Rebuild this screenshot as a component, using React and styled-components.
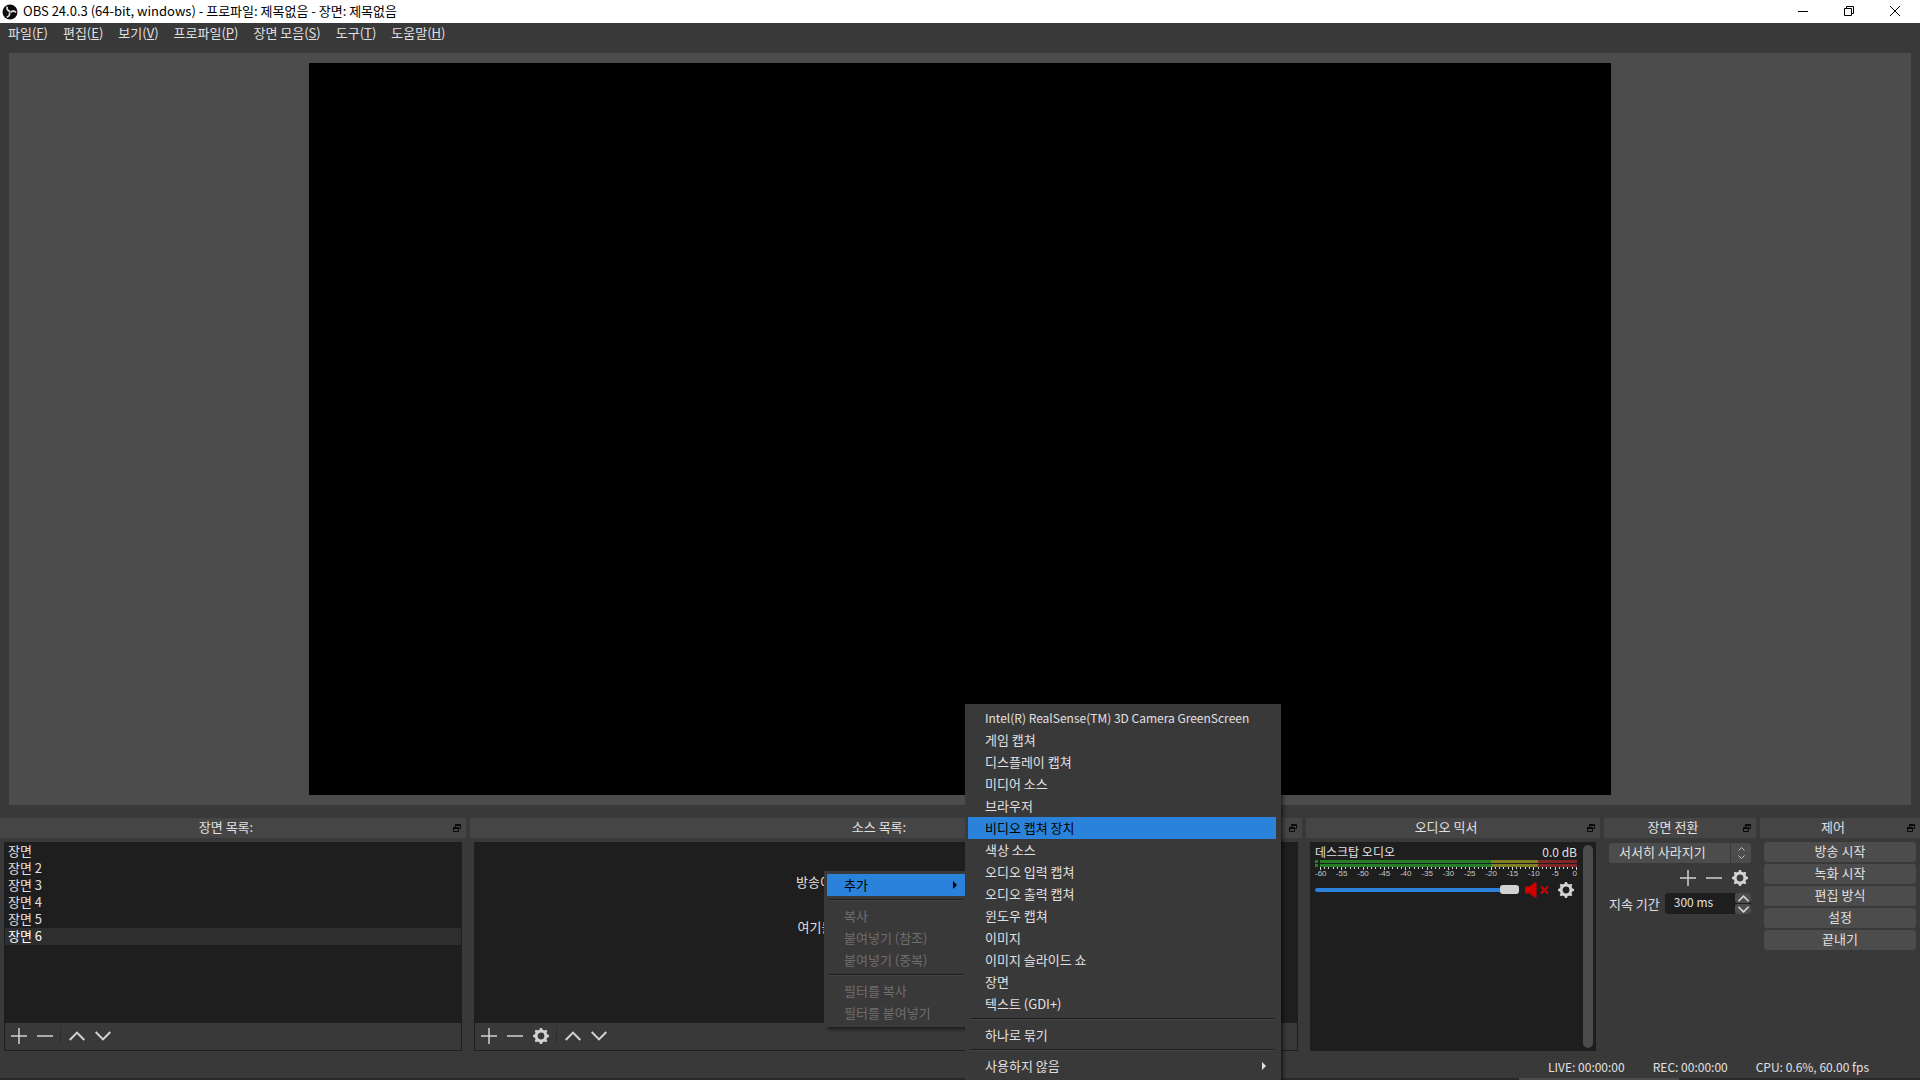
import React, { useState } from "react";
import styled, { createGlobalStyle } from "styled-components";

const ui = '"Noto Sans CJK KR", sans-serif';

const Global = createGlobalStyle`
  *, *::before, *::after { box-sizing: border-box; }
  body { margin: 0; background: #3a393a; color: #e1e0e1; font: 13px/16px ${ui}; overflow: hidden; }
  button, input, select { font: inherit; color: inherit; margin: 0; padding: 0; border: 0; background: none; }
  ul { list-style: none; margin: 0; padding: 0; }
`;

const Window = styled.div`
  display: flex;
  flex-direction: column;
  height: 100vh;
`;

const TitleBar = styled.header`
  display: flex;
  align-items: center;
  gap: 5px;
  height: 23px;
  padding-left: 2px;
  background: #fff;
  color: #000;
  flex: none;
`;

const WindowTitle = styled.h1`
  margin: 0;
  padding-bottom: 2px;
  flex: 1;
  font-size: 13px;
  font-weight: 400;
`;

const Caption = styled.div`
  display: flex;
  gap: 7px;
  padding-right: 6px;
`;

const CaptionButton = styled.button`
  display: grid;
  place-items: center;
  width: 39px;
  height: 22px;
  padding-bottom: 2px;
`;

const MenuBar = styled.nav`
  display: flex;
  align-items: center;
  gap: 15px;
  height: 22px;
  padding: 0 0 2px 8px;
  flex: none;
`;

const MenuButton = styled.button`
  white-space: nowrap;
`;

const PreviewArea = styled.main`
  display: grid;
  place-items: center;
  flex: 1;
  min-height: 0;
  margin: 8px 9px 13px;
  padding: 10px;
  background: #4c4c4c;
`;

const Preview = styled.div`
  height: 100%;
  aspect-ratio: 16 / 9;
  background: #000;
`;

const Docks = styled.div`
  display: grid;
  grid-template-columns: 466fr 832fr 294fr 152fr 160fr;
  gap: 4px;
  height: 233px;
  flex: none;
`;

const DockPanel = styled.section`
  display: flex;
  flex-direction: column;
  min-width: 0;
`;

const DockHeader = styled.div`
  display: flex;
  align-items: center;
  height: 20px;
  padding-right: 5px;
  background: #464546;
  flex: none;
`;

const DockTitle = styled.h2`
  flex: 1;
  margin: 0;
  padding-bottom: 2px;
  font-size: 13px;
  line-height: 16px;
  font-weight: 400;
  text-align: center;
`;

const FloatButton = styled.button`
  display: grid;
  place-items: center;
  width: 9px;
  height: 12px;
`;

const ListFrame = styled.div`
  display: flex;
  flex-direction: column;
  flex: 1;
  margin: 4px 4px 0;
  border: 1px solid #1f1e1f;
  background: #1f1e1f;
`;

const SceneList = styled.ul`
  flex: 1;
`;

const SceneRow = styled.li`
  height: 17px;
  background: ${(p) => (p.$selected ? "#2f2e2f" : "transparent")};
  color: ${(p) => (p.$selected ? "#fff" : "#e1e0e1")};
`;

const SceneButton = styled.button`
  display: block;
  width: 100%;
  padding-left: 3px;
  text-align: left;
  line-height: 15px;
`;

const Toolbar = styled.div`
  display: flex;
  align-items: center;
  height: 27px;
  padding: 0 0 2px 1px;
  background: #3a393a;
`;

const IconButton = styled.button`
  display: grid;
  place-items: center;
  width: 26px;
  height: 24px;
`;

const Divider = styled.span`
  width: 1px;
  height: 19px;
  margin: 0 3px 0 2px;
  background: #2f2e2f;
`;

const EmptyHint = styled.div`
  flex: 1;
  padding-top: 31px;
  text-align: center;

  p { margin: 0 0 29px; }
`;

const MixerFrame = styled.div`
  display: flex;
  flex: 1;
  gap: 6px;
  margin: 4px 4px 0;
  padding: 3px 3px 3px 5px;
  background: #1f1e1f;
`;

const Channel = styled.div`
  flex: 1;
  min-width: 0;
`;

const ChannelHead = styled.div`
  display: flex;
  justify-content: space-between;
  height: 15px;
  font-size: 12px;
  line-height: 14px;
`;

const Meter = styled.svg`
  display: block;
  width: 100%;
  height: 18px;

  text { font: 8px "Liberation Sans", sans-serif; fill: #c8c8c8; }
`;

const ChannelControls = styled.div`
  display: grid;
  grid-template-columns: 1fr 24px 22px;
  align-items: center;
  gap: 6px;
  height: 24px;

  button { width: 100%; }
`;

const Volume = styled.input.attrs({ type: "range" })`
  width: 100%;
  min-width: 0;
  height: 20px;
  appearance: none;

  &::-webkit-slider-runnable-track {
    height: 4px;
    border-radius: 2px;
    background: #2a82da;
  }
  &::-webkit-slider-thumb {
    appearance: none;
    width: 19px;
    height: 9px;
    margin-top: -3px;
    border-radius: 3px;
    background: #d2d2d2;
  }
`;

const ScrollBar = styled.div`
  width: 10px;
  border-radius: 5px;
  background: #4c4c4c;
`;

const TransitionBody = styled.div`
  display: flex;
  flex-direction: column;
  padding: 5px;
`;

const SelectBox = styled.div`
  display: grid;
  grid-template-columns: 1fr 20px;
  height: 20px;
`;

const TransitionSelect = styled.select`
  appearance: none;
  grid-area: 1 / 1 / 2 / 3;
  width: 100%;
  padding: 0 24px 2px 10px;
  border-radius: 3px;
  background: linear-gradient(#3a393a, #3a393a) right 20px top / 1px 100% no-repeat #4c4c4c;
`;

const SelectArrow = styled.span`
  display: grid;
  place-items: center;
  grid-area: 1 / 2;
  pointer-events: none;
`;

const TransitionTools = styled.div`
  display: flex;
  justify-content: flex-end;
  margin: 3px -2px 3px 0;
`;

const DurationRow = styled.div`
  display: flex;
  align-items: center;
  gap: 5px;
  height: 21px;
`;

const SpinBox = styled.div`
  display: flex;
  flex: 1;
  min-width: 0;
  height: 21px;
  border-radius: 3px;
  overflow: hidden;
  background: #1f1e1f;
`;

const SpinInput = styled.input`
  flex: 1;
  width: 0;
  padding: 0 0 3px 9px;
  font-size: 12px;
`;

const SpinButtons = styled.div`
  display: grid;
  grid-template-rows: 1fr 1fr;
  gap: 1px;
  width: 16px;
`;

const SpinButton = styled.button`
  display: grid;
  place-items: center;
  border-radius: 2px;
  background: #4c4c4c;
`;

const ControlList = styled.div`
  display: grid;
  gap: 2px;
  padding: 4px;
`;

const ControlButton = styled.button`
  height: 20px;
  padding-bottom: 2px;
  border-radius: 3px;
  background: #4c4c4c;
`;

const StatusBar = styled.footer`
  display: flex;
  align-items: center;
  justify-content: flex-end;
  gap: 28px;
  height: 27px;
  padding: 5px 51px 0 0;
  flex: none;
  font-size: 12px;
`;

const Edge = styled.div`
  height: 2px;
  flex: none;
  background: linear-gradient(#4c4c4c, #4c4c4c) right 241px top / 160px 100% no-repeat #282828;
`;

const Popup = styled.div`
  position: absolute;
  left: ${(p) => p.$x}px;
  top: ${(p) => p.$y}px;
  width: ${(p) => p.$w}px;
  padding: 3px;
  background: #3a393a;
  box-shadow: 3px 3px 4px -1px rgba(0, 0, 0, 0.6);
`;

const PopupItem = styled.button`
  display: flex;
  align-items: center;
  justify-content: space-between;
  width: ${(p) => (p.$inset ? "308px" : "100%")};
  height: 22px;
  padding: 0 10px 0 17px;
  background: ${(p) => (p.$active ? "#2a82da" : "transparent")};
  color: ${(p) => (p.$active ? "#000" : "#e1e0e1")};
  font-size: ${(p) => (p.$latin ? "12px" : "13px")};
  text-align: left;
  white-space: nowrap;

  &:disabled { color: #6f6e6f; }
`;

const PopupRule = styled.hr`
  height: 2px;
  margin: 3px 4px 4px 2px;
  border: 0;
  border-top: 1px solid #1f1e1f;
  background: #454445;
`;

const Logo = () => (
  <svg width="16" height="16" viewBox="0 0 16 16">
    <circle cx="8" cy="8" r="7.5" fill="#0c0a0c" />
    <g fill="none" stroke="#d8d8d8" strokeWidth="1.7">
      {[0, 120, 240].map((a) => (
        <path key={a} d="M5.2 2.6c-.5 2.4.6 4.2 2.9 4.8" transform={`rotate(${a} 8 8)`} />
      ))}
    </g>
  </svg>
);

const Plus = () => (
  <svg width="16" height="16" viewBox="0 0 16 16" fill="none" stroke="#d2d2d2" strokeWidth="1.5">
    <path d="M8 0v16M0 8h16" />
  </svg>
);
const Minus = () => (
  <svg width="16" height="16" viewBox="0 0 16 16" fill="none" stroke="#d2d2d2" strokeWidth="1.5">
    <path d="M0 8h16" />
  </svg>
);
const Chevron = ({ down, w = 16, h = 10, stroke = 2 }) => (
  <svg width={w} height={h} viewBox="0 0 16 10" fill="none" stroke="#d2d2d2" strokeWidth={stroke}>
    <path d={down ? "M.7 1L8 8.4 15.3 1" : "M.7 9L8 1.6 15.3 9"} />
  </svg>
);
const Gear = () => (
  <svg width="16" height="16" viewBox="0 0 16 16">
    <circle cx="8" cy="8" r="4.9" fill="none" stroke="#d2d2d2" strokeWidth="3" />
    {[0, 45, 90, 135, 180, 225, 270, 315].map((a) => (
      <path key={a} d="M6.3 2.4L7 0h2l.7 2.4z" fill="#d2d2d2" transform={`rotate(${a} 8 8)`} />
    ))}
  </svg>
);
const Muted = () => (
  <svg width="24" height="16" viewBox="0 0 24 16">
    <path d="M0 4.5h4.5L10.500 0h1v16h-1l-6-4.500H0z" fill="#d40000" />
    <path d="M16 4.500l7 7M23 4.500l-7 7" stroke="#d40000" strokeWidth="2" />
  </svg>
);
const FloatIcon = () => (
  <svg width="8" height="8" viewBox="0 0 8 8" fill="none" stroke="#0a0a0a">
    <path d="M2.500 3V.5h5v4H6" />
    <path d="M2.500 1h5M.5 4h5" strokeWidth="2" />
    <path d="M.5 3.500h5v4h-5z" />
  </svg>
);
const Arrow = () => (
  <svg width="4" height="8" viewBox="0 0 4 8">
    <path d="M0 0l4 4-4 4z" fill="currentColor" />
  </svg>
);

const menus = [
  ["파일", "F"], ["편집", "E"], ["보기", "V"], ["프로파일", "P"],
  ["장면 모음", "S"], ["도구", "T"], ["도움말", "H"],
];
const scenes = ["장면", "장면 2", "장면 3", "장면 4", "장면 5", "장면 6"];
const sources = [
  "Intel(R) RealSense(TM) 3D Camera GreenScreen", "게임 캡쳐", "디스플레이 캡쳐", "미디어 소스",
  "브라우저", "비디오 캡쳐 장치", "색상 소스", "오디오 입력 캡쳐", "오디오 출력 캡쳐", "윈도우 캡쳐",
  "이미지", "이미지 슬라이드 쇼", "장면", "텍스트 (GDI+)",
];
const controls = ["방송 시작", "녹화 시작", "편집 방식", "설정", "끝내기"];

function Dock({ title, children }) {
  return (
    <DockPanel>
      <DockHeader>
        <DockTitle>{title}</DockTitle>
        <FloatButton aria-label="분리"><FloatIcon /></FloatButton>
      </DockHeader>
      {children}
    </DockPanel>
  );
}

function VolumeMeter() {
  const x = (db) => 262 + db * 4.27 - 0.5;
  return (
    <Meter viewBox="0 0 262 18" preserveAspectRatio="none">
      {[0, 4].map((y) => (
        <g key={y}>
          <rect x="0" y={y} width="3" height="3" fill="#267f26" />
          <rect x="5" y={y} width="171" height="3" fill="#267f26" />
          <rect x="176" y={y} width="47" height="3" fill="#7f7f26" />
          <rect x="223" y={y} width="39" height="3" fill="#7f2626" />
        </g>
      ))}
      {Array.from({ length: 61 }, (_, i) => (
        <rect key={i} x={Math.round(x(-i) - 0.5)} y="7" width="1" height={i % 5 ? 2 : 3} fill="#d2d2d2" />
      ))}
      {Array.from({ length: 13 }, (_, i) => (
        <text key={i} x={i === 0 ? 262 : i === 12 ? 0 : x(-i * 5)} y="16"
          textAnchor={i === 0 ? "end" : i === 12 ? "start" : "middle"}>
          {i === 0 ? "0" : -i * 5}
        </text>
      ))}
    </Meter>
  );
}

export default function App() {
  const [scene, setScene] = useState(5);
  return (
    <>
      <Global />
      <Window>
        <TitleBar>
          <Logo />
          <WindowTitle>OBS 24.0.3 (64-bit, windows) - 프로파일: 제목없음 - 장면: 제목없음</WindowTitle>
          <Caption>
            <CaptionButton aria-label="최소화">
              <svg width="10" height="10"><path d="M0 5.500h10" stroke="#000" /></svg>
            </CaptionButton>
            <CaptionButton aria-label="이전 크기로">
              <svg width="10" height="10" fill="none" stroke="#000">
                <path d="M.5 2.500h7v7h-7zM2.500 2.500v-2h7v7h-2" />
              </svg>
            </CaptionButton>
            <CaptionButton aria-label="닫기">
              <svg width="10" height="10"><path d="M0 0l10 10M10 0L0 10" stroke="#000" /></svg>
            </CaptionButton>
          </Caption>
        </TitleBar>
        <MenuBar>
          {menus.map(([name, key]) => (
            <MenuButton key={key}>{name}(<u>{key}</u>)</MenuButton>
          ))}
        </MenuBar>
        <PreviewArea><Preview /></PreviewArea>
        <Docks>
          <Dock title="장면 목록:">
            <ListFrame>
              <SceneList>
                {scenes.map((s, i) => (
                  <SceneRow key={s} $selected={i === scene}>
                    <SceneButton onClick={() => setScene(i)}>{s}</SceneButton>
                  </SceneRow>
                ))}
              </SceneList>
              <Toolbar>
                <IconButton aria-label="추가"><Plus /></IconButton>
                <IconButton aria-label="제거"><Minus /></IconButton>
                <Divider />
                <IconButton aria-label="위로"><Chevron /></IconButton>
                <IconButton aria-label="아래로"><Chevron down /></IconButton>
              </Toolbar>
            </ListFrame>
          </Dock>
          <Dock title="소스 목록:">
            <ListFrame>
              <EmptyHint>
                <p>방송이나 녹화용 소스가 없습니다.</p>
                <p>여기를 우클릭하여 추가하십시오.</p>
              </EmptyHint>
              <Toolbar>
                <IconButton aria-label="추가"><Plus /></IconButton>
                <IconButton aria-label="제거"><Minus /></IconButton>
                <IconButton aria-label="속성"><Gear /></IconButton>
                <Divider />
                <IconButton aria-label="위로"><Chevron /></IconButton>
                <IconButton aria-label="아래로"><Chevron down /></IconButton>
              </Toolbar>
            </ListFrame>
          </Dock>
          <Dock title="오디오 믹서">
            <MixerFrame>
              <Channel>
                <ChannelHead>
                  <label htmlFor="volume">데스크탑 오디오</label>
                  <span>0.0 dB</span>
                </ChannelHead>
                <VolumeMeter />
                <ChannelControls>
                  <Volume id="volume" defaultValue="100" />
                  <IconButton aria-label="음소거"><Muted /></IconButton>
                  <IconButton aria-label="오디오 설정"><Gear /></IconButton>
                </ChannelControls>
              </Channel>
              <ScrollBar />
            </MixerFrame>
          </Dock>
          <Dock title="장면 전환">
            <TransitionBody>
              <SelectBox>
                <TransitionSelect aria-label="장면 전환"><option>서서히 사라지기</option></TransitionSelect>
                <SelectArrow>
                  <svg width="7" height="12" fill="none" stroke="#c0c0c0">
                    <path d="M.5 3.500l3-3 3 3M.5 8.500l3 3 3-3" />
                  </svg>
                </SelectArrow>
              </SelectBox>
              <TransitionTools>
                <IconButton aria-label="전환 추가"><Plus /></IconButton>
                <IconButton aria-label="전환 제거"><Minus /></IconButton>
                <IconButton aria-label="전환 속성"><Gear /></IconButton>
              </TransitionTools>
              <DurationRow>
                <label htmlFor="duration">지속 기간</label>
                <SpinBox>
                  <SpinInput id="duration" defaultValue="300 ms" />
                  <SpinButtons>
                    <SpinButton aria-label="늘리기"><Chevron w={11} h={7} stroke={2.500} /></SpinButton>
                    <SpinButton aria-label="줄이기"><Chevron down w={11} h={7} stroke={2.500} /></SpinButton>
                  </SpinButtons>
                </SpinBox>
              </DurationRow>
            </TransitionBody>
          </Dock>
          <Dock title="제어">
            <ControlList>
              {controls.map((c) => <ControlButton key={c}>{c}</ControlButton>)}
            </ControlList>
          </Dock>
        </Docks>
        <StatusBar>
          <span>LIVE: 00:00:00</span>
          <span>REC: 00:00:00</span>
          <span>CPU: 0.6%, 60.00 fps</span>
        </StatusBar>
        <Edge />
      </Window>
      <Popup $x={824} $y={871} $w={146}>
        <PopupItem $active>추가<Arrow /></PopupItem>
        <PopupRule />
        <PopupItem disabled>복사</PopupItem>
        <PopupItem disabled>붙여넣기 (참조)</PopupItem>
        <PopupItem disabled>붙여넣기 (중복)</PopupItem>
        <PopupRule />
        <PopupItem disabled>필터를 복사</PopupItem>
        <PopupItem disabled>필터를 붙여넣기</PopupItem>
      </Popup>
      <Popup $x={965} $y={704} $w={316}>
        {sources.map((s, i) => (
          <PopupItem key={s} $inset $latin={i === 0} $active={i === 5}>{s}</PopupItem>
        ))}
        <PopupRule />
        <PopupItem $inset>하나로 묶기</PopupItem>
        <PopupRule />
        <PopupItem $inset>사용하지 않음<Arrow /></PopupItem>
      </Popup>
    </>
  );
}
